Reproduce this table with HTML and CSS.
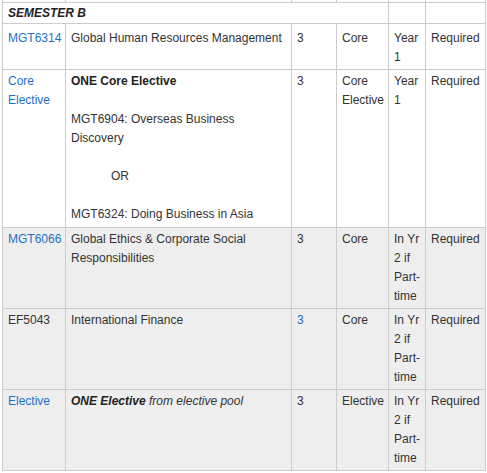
FILE: index.html
```html
<!DOCTYPE html>
<html>
<head>
<meta charset="utf-8">
<link rel="stylesheet" href="styles.css">
</head>
<body>
<table class="courses">
  <colgroup>
    <col class="c-code">
    <col class="c-title">
    <col class="c-cu">
    <col class="c-type">
    <col class="c-year">
    <col class="c-req">
  </colgroup>
  <tbody>
    <tr class="prev-row">
      <td></td><td></td><td></td><td></td><td></td><td></td>
    </tr>
    <tr class="sem-row">
      <td colspan="4" class="sem"><em><strong>SEMESTER B</strong></em></td>
      <td></td>
      <td></td>
    </tr>
    <tr class="first-row">
      <td><a href="#">MGT6314</a></td>
      <td>Global Human Resources Management</td>
      <td>3</td>
      <td>Core</td>
      <td>Year 1</td>
      <td>Required</td>
    </tr>
    <tr class="choice-row">
      <td><a href="#">Core Elective</a></td>
      <td><strong>ONE Core Elective</strong><br><br>MGT6904: Overseas Business Discovery<br><br><span class="or">OR</span><br><br>MGT6324: Doing Business in Asia</td>
      <td>3</td>
      <td>Core Elective</td>
      <td>Year 1</td>
      <td>Required</td>
    </tr>
    <tr class="alt">
      <td><a href="#">MGT6066</a></td>
      <td>Global Ethics &amp; Corporate Social Responsibilities</td>
      <td>3</td>
      <td>Core</td>
      <td>In Yr 2 if Part-time</td>
      <td>Required</td>
    </tr>
    <tr class="alt">
      <td>EF5043</td>
      <td>International Finance</td>
      <td><a href="#">3</a></td>
      <td>Core</td>
      <td>In Yr 2 if Part-time</td>
      <td>Required</td>
    </tr>
    <tr class="alt">
      <td><a href="#">Elective</a></td>
      <td><em><strong>ONE Elective</strong> from elective pool</em></td>
      <td>3</td>
      <td>Elective</td>
      <td>In Yr 2 if Part-time</td>
      <td>Required</td>
    </tr>
  </tbody>
</table>
</body>
</html>
```

FILE: styles.css
```css
html, body {
  margin: 0;
  padding: 0;
  background: #fff;
}

body {
  font-family: "Liberation Sans", Arial, sans-serif;
  font-size: 12px;
  line-height: 19px;
  color: #333;
}

.courses {
  border-collapse: collapse;
  table-layout: fixed;
  width: 483px;
  margin: -18px 0 0 2px;
}

.c-code { width: 63px; }
.c-title { width: 226px; }
.c-cu { width: 45px; }
.c-type { width: 52px; }
.c-year { width: 37px; }
.c-req { width: 60px; }

.courses td {
  border: 1px solid #ccc;
  padding: 2px 5px 2px;
  vertical-align: top;
  overflow-wrap: normal;
}

.prev-row td {
  height: 19px;
  padding: 0;
}

.sem-row td {
  padding: 1px 5px 0;
  height: 19px;
  line-height: 19.2px;
}

.sem {
  color: #111;
}

.first-row td {
  padding-top: 5px;
  padding-bottom: 2px;
}

.choice-row td {
  padding-top: 2px;
  padding-bottom: 3px;
}

.alt td {
  background: #eee;
}

.courses a {
  color: #1e6fc6;
  text-decoration: none;
}

.courses strong {
  color: #222;
}

.or {
  padding-left: 40px;
}
```
